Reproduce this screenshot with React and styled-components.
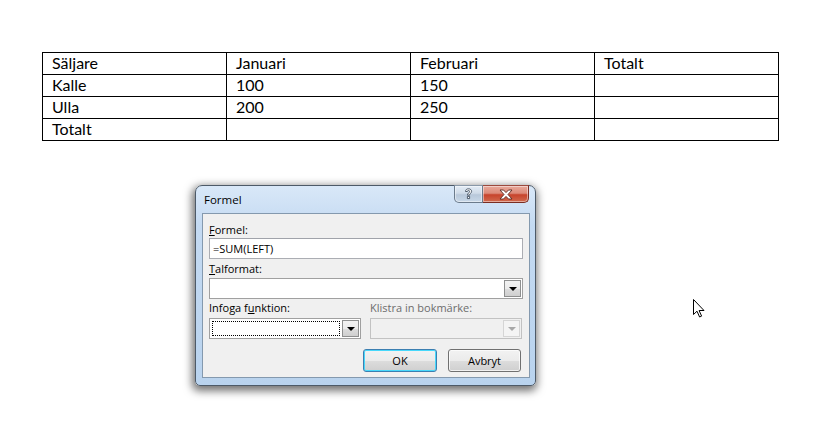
import React from 'react';
import styled, { createGlobalStyle } from 'styled-components';

const GlobalStyle = createGlobalStyle`
  html, body {
    margin: 0;
    background: #ffffff;
  }
`;

const Page = styled.div`
  position: relative;
  height: 427px;
  box-sizing: border-box;
  padding: 52px 0 0 42px;
  overflow: hidden;
`;

const Table = styled.table`
  border-collapse: collapse;
  table-layout: fixed;
  width: 737px;
  font-family: Lato, "Liberation Sans", sans-serif;
  font-size: 16px;
  color: #000;

  td {
    border: 1px solid #000;
    height: 20px;
    padding: 0 0 1px 9px;
    line-height: 20px;
    vertical-align: bottom;
  }
`;

const DialogSlot = styled.div`
  margin: 44px 0 0 153px;
`;

const Window = styled.div`
  width: 341px;
  height: 201px;
  box-sizing: border-box;
  border: 1px solid #4d5a68;
  border-radius: 7px 7px 5px 5px;
  background: linear-gradient(180deg, #d9e8f8 0%, #c4daf2 20%, #b9d3ee 100%);
  box-shadow: -1px 3px 9px 2px rgba(0, 0, 0, 0.55);
  display: flex;
  flex-direction: column;
  font-family: "Segoe UI", "Open Sans", "Noto Sans", sans-serif;
  font-size: 11px;
  color: #000;
`;

const TitleBar = styled.div`
  height: 27px;
  display: flex;
  align-items: flex-start;
  padding-left: 8px;
  padding-right: 6px;
`;

const Title = styled.div`
  flex: 1;
  line-height: 27px;
  font-size: 11.5px;
`;

const CaptionButton = styled.div`
  height: 18px;
  width: ${p => p.$w}px;
  margin-top: -1px;
  box-sizing: border-box;
  border: 1px solid ${p => (p.$close ? '#7a2d22' : '#6b7b8c')};
  border-top-color: ${p => (p.$close ? '#9c4a3e' : '#8998a8')};
  border-radius: ${p => (p.$close ? '0 0 5px 0' : '0 0 0 5px')};
  border-left-width: ${p => (p.$close ? '0' : '1px')};
  background: ${p =>
    p.$close
      ? 'linear-gradient(180deg, #e9a99b 0%, #dc8a79 45%, #c7432c 55%, #d16a4e 100%)'
      : 'linear-gradient(180deg, #e3ecf6 0%, #cfdbe8 45%, #b8c8da 55%, #c8d8e8 100%)'};
  display: flex;
  align-items: center;
  justify-content: center;
  box-shadow: inset 0 0 0 1px rgba(255, 255, 255, 0.45);
`;

const Client = styled.div`
  flex: 1;
  margin: 0 5px 7px 6px;
  border: 1px solid #8499ae;
  background: #f0f0f0;
  padding: 8px 6px 0 6px;
  display: flex;
  flex-direction: column;
`;

const Label = styled.div`
  line-height: 15px;
  height: 15px;
  margin-top: ${p => p.$mt || 0}px;
  margin-bottom: ${p => p.$mb || 1}px;
  color: ${p => (p.$disabled ? '#6d6d6d' : '#000')};
  white-space: nowrap;

  u {
    text-decoration: underline;
    text-underline-offset: 1px;
  }
`;

const TextBox = styled.div`
  height: 21px;
  box-sizing: border-box;
  border: 1px solid #abadb3;
  border-top-color: #a0a3aa;
  background: #fff;
  padding-left: 3px;
  line-height: 19px;
  display: flex;
  align-items: center;
`;

const Combo = styled.div`
  height: 21px;
  box-sizing: border-box;
  border: 1px solid ${p => (p.$disabled ? '#c2c2c2' : '#a0a0a0')};
  background: ${p => (p.$disabled ? '#f0f0f0' : '#fff')};
  display: flex;
  padding: 1px;
`;

const ComboText = styled.div`
  flex: 1;
  margin: 1px 2px 1px 1px;
  border: 1px dotted ${p => (p.$focus ? '#000' : 'transparent')};
`;

const DropButton = styled.div`
  width: 17px;
  box-sizing: border-box;
  border: 1px solid ${p => (p.$disabled ? '#d5d5d5' : '#8e8f8f')};
  background: ${p =>
    p.$disabled
      ? '#f4f4f4'
      : 'linear-gradient(180deg, #f2f2f2 0%, #ebebeb 50%, #dddddd 51%, #cfcfcf 100%)'};
  display: flex;
  align-items: center;
  justify-content: center;
`;

const Arrow = styled.div`
  width: 0;
  height: 0;
  border-left: 4px solid transparent;
  border-right: 4px solid transparent;
  border-top: 4px solid ${p => (p.$disabled ? '#a8a8a8' : '#000')};
`;

const Columns = styled.div`
  display: grid;
  grid-template-columns: 152px 152px;
  column-gap: 9px;
  margin-top: 1px;
`;

const Buttons = styled.div`
  display: flex;
  justify-content: flex-end;
  gap: 11px;
  margin-top: 10px;
  padding-right: 2px;
`;

const Button = styled.div`
  width: ${p => p.$w}px;
  height: 23px;
  box-sizing: border-box;
  border: 1px solid ${p => (p.$default ? '#3c7fb1' : '#707070')};
  border-radius: 3px;
  background: linear-gradient(180deg, #f2f2f2 0%, #ebebeb 50%, #dddddd 51%, #cfcfcf 100%);
  box-shadow: ${p =>
    p.$default ? 'inset 0 0 0 1px #48d8fb' : 'inset 0 0 0 1px rgba(255,255,255,0.7)'};
  display: flex;
  align-items: center;
  justify-content: center;
`;

const Cursor = styled.svg`
  position: absolute;
  left: 693px;
  top: 299px;
`;

const rows = [
  ['Säljare', 'Januari', 'Februari', 'Totalt'],
  ['Kalle', '100', '150', ''],
  ['Ulla', '200', '250', ''],
  ['Totalt', '', '', ''],
];

export default function App() {
  return (
    <Page>
      <GlobalStyle />
      <Table>
        <colgroup>
          <col style={{ width: 184 }} />
          <col style={{ width: 184 }} />
          <col style={{ width: 184 }} />
          <col style={{ width: 184 }} />
        </colgroup>
        <tbody>
          {rows.map((r, i) => (
            <tr key={i}>
              {r.map((c, j) => (
                <td key={j}>{c}</td>
              ))}
            </tr>
          ))}
        </tbody>
      </Table>

      <DialogSlot>
        <Window>
          <TitleBar>
            <Title>Formel</Title>
            <CaptionButton $w={29}>
              <svg width="9" height="12" viewBox="0 0 9 12">
                <path
                  d="M1.5 3.5 C1.5 1.5 3 0.8 4.5 0.8 C6.3 0.8 7.6 1.9 7.6 3.4 C7.6 5 5.5 5.6 5.5 7.2 L3.5 7.2 C3.5 5.2 5.6 4.6 5.6 3.4 C5.6 2.8 5.1 2.4 4.5 2.4 C3.8 2.4 3.4 2.9 3.4 3.5 Z M3.4 8.4 L5.6 8.4 L5.6 10.6 L3.4 10.6 Z"
                  fill="#fff"
                  stroke="#3f4d5c"
                  strokeWidth="0.9"
                />
              </svg>
            </CaptionButton>
            <CaptionButton $w={46} $close>
              <svg width="14" height="11" viewBox="0 0 14 11">
                <path
                  d="M1 1 L4.5 1 L7 3.6 L9.5 1 L13 1 L9 5.5 L13 10 L9.5 10 L7 7.4 L4.5 10 L1 10 L5 5.5 Z"
                  fill="#fff"
                  stroke="#5a2a22"
                  strokeWidth="0.9"
                  strokeLinejoin="round"
                />
              </svg>
            </CaptionButton>
          </TitleBar>
          <Client>
            <Label>
              <u>F</u>ormel:
            </Label>
            <TextBox>=SUM(LEFT)</TextBox>
            <Label $mt={2} $mb={2}>
              <u>T</u>alformat:
            </Label>
            <Combo>
              <ComboText />
              <DropButton>
                <Arrow />
              </DropButton>
            </Combo>
            <Columns>
              <div>
                <Label $mb={3}>
                  Infoga f<u>u</u>nktion:
                </Label>
                <Combo>
                  <ComboText $focus />
                  <DropButton>
                    <Arrow />
                  </DropButton>
                </Combo>
              </div>
              <div>
                <Label $mb={3} $disabled>
                  Klistra in bokmärke:
                </Label>
                <Combo $disabled>
                  <ComboText />
                  <DropButton $disabled>
                    <Arrow $disabled />
                  </DropButton>
                </Combo>
              </div>
            </Columns>
            <Buttons>
              <Button $w={74} $default>
                OK
              </Button>
              <Button $w={73}>Avbryt</Button>
            </Buttons>
          </Client>
        </Window>
      </DialogSlot>

      <Cursor width="13" height="19" viewBox="0 0 13 19">
        <path
          d="M0.5 0.5 L0.5 15.5 L4 12.2 L6.6 18 L8.6 17.1 L6.1 11.5 L11 11.5 Z"
          fill="#fff"
          stroke="#000"
          strokeWidth="1"
          strokeLinejoin="miter"
        />
      </Cursor>
    </Page>
  );
}
